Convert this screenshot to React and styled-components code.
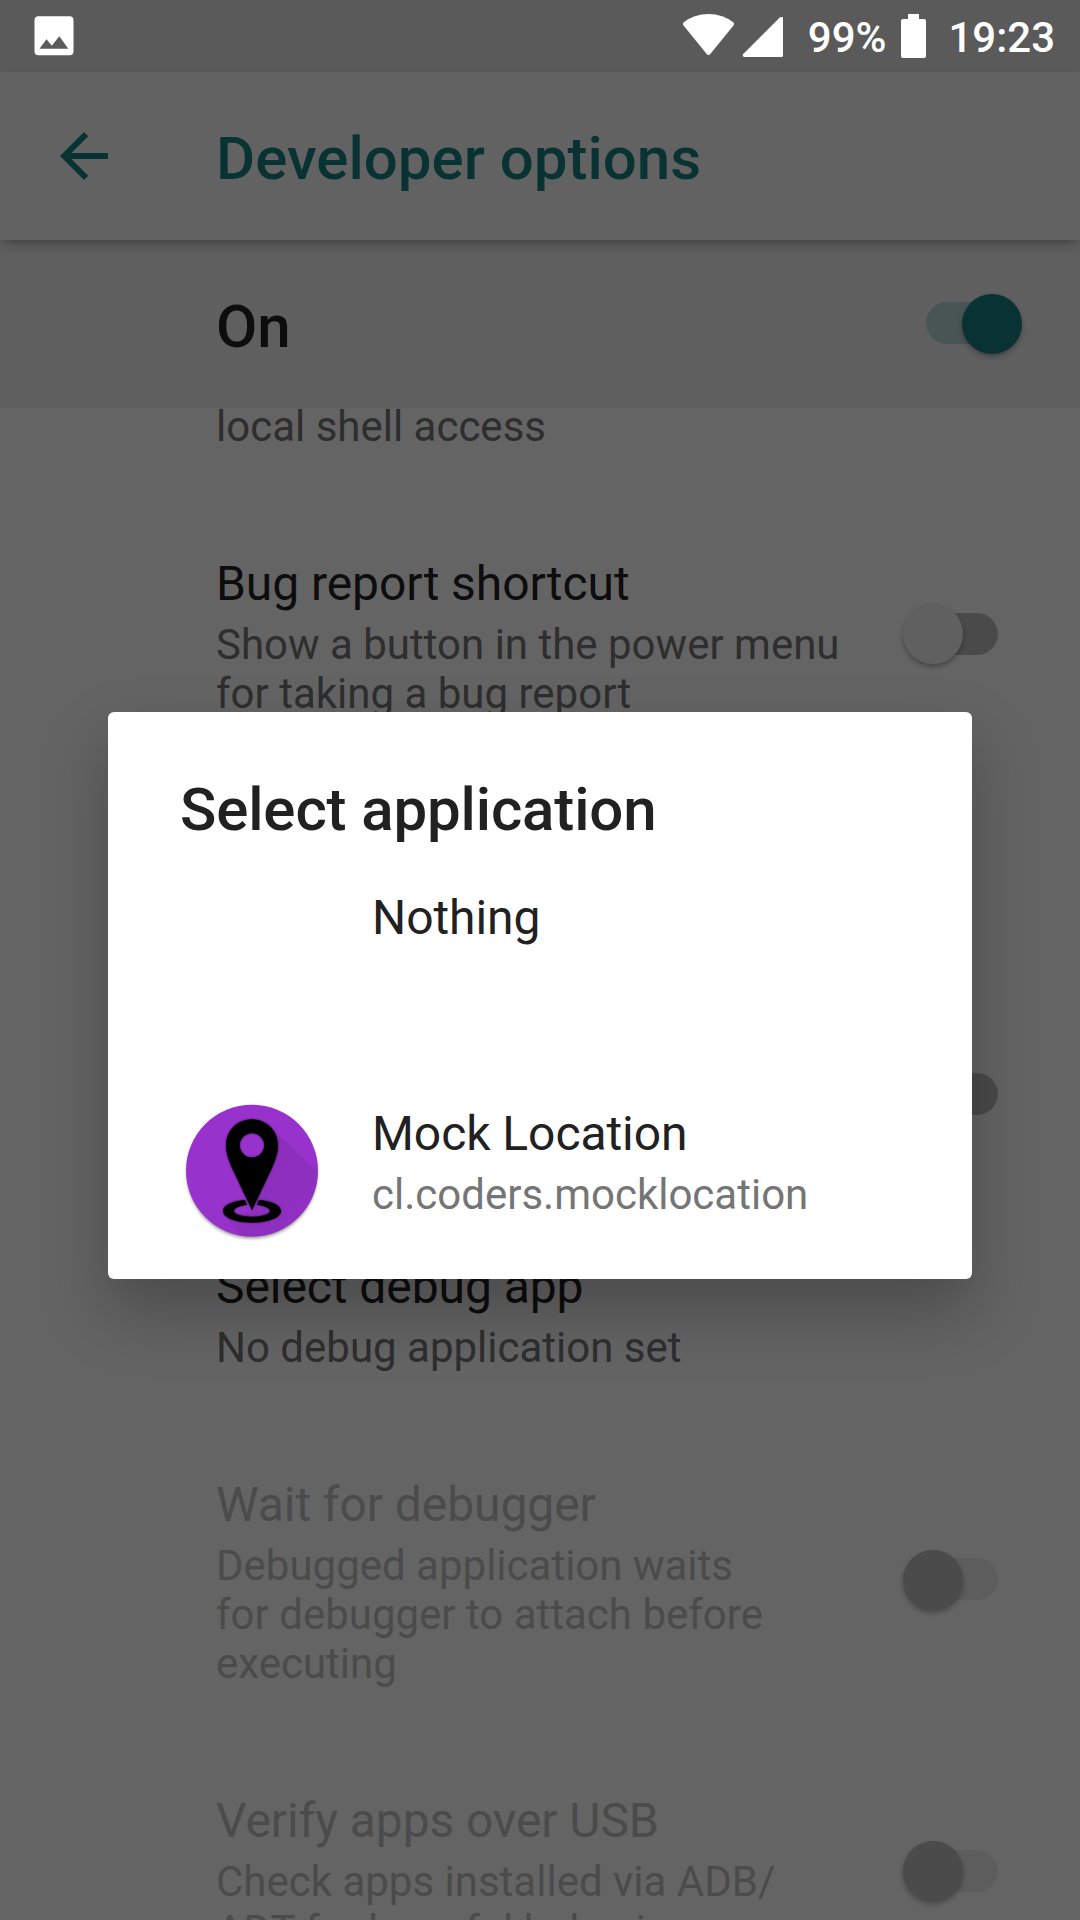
import React from "react";
import styled, { createGlobalStyle } from "styled-components";

const GlobalStyle = createGlobalStyle`
  * { box-sizing: border-box; }
  html, body { margin: 0; padding: 0; background: #646464; }
  body { font-family: Roboto, "Noto Sans", sans-serif; }
`;

const Screen = styled.div`
  position: relative;
  display: flex;
  flex-direction: column;
  width: 1080px;
  height: 1920px;
  overflow: hidden;
  background: #646464;
`;

const StatusBar = styled.header`
  display: flex;
  align-items: flex-start;
  justify-content: space-between;
  flex: none;
  height: 72px;
  padding: 0 25px 0 34px;
  background: #5a5a5a;
  color: #fff;
`;

const StatusIcons = styled.div`
  display: flex;
  align-items: flex-start;
`;

const StatusText = styled.span`
  font-size: 42px;
  font-weight: 500;
  line-height: 50px;
  padding-top: 13px;
  white-space: nowrap;
  margin-left: ${(p) => p.$gap}px;
`;

const StatusGlyph = styled.svg`
  display: block;
  flex: none;
  fill: #fff;
  margin-left: ${(p) => p.$gap || 0}px;
`;

const Toolbar = styled.div`
  display: flex;
  align-items: flex-start;
  flex: none;
  height: 168px;
  padding: 0 48px;
  background: #626262;
  color: #093233;
  z-index: 1;
  box-shadow: 0 6px 10px -3px rgba(0, 0, 0, 0.32);
`;

const BackIcon = styled.svg`
  display: block;
  width: 72px;
  height: 72px;
  margin-top: 48px;
  fill: currentColor;
`;

const ToolbarTitle = styled.h1`
  margin: 52px 0 0 96px;
  font-size: 60px;
  font-weight: 500;
  line-height: 70px;
  white-space: nowrap;
`;

const SwitchBar = styled.div`
  display: flex;
  align-items: center;
  justify-content: space-between;
  flex: none;
  height: 168px;
  padding: 0 58px 0 216px;
  background: #5f5f5f;
`;

const SwitchBarLabel = styled.span`
  padding-top: 5px;
  font-size: 60px;
  font-weight: 500;
  line-height: 70px;
  color: #0d0d0d;
`;

const tones = {
  on: { track: "#495455", thumb: "#093233" },
  off: { track: "#4a4a4a", thumb: "#606060" },
  disabled: { track: "#5d5d5d", thumb: "#4b4b4b" },
};

const Track = styled.span`
  display: flex;
  align-items: center;
  flex: none;
  justify-content: ${(p) => (p.$tone === "on" ? "flex-end" : "flex-start")};
  width: 96px;
  height: 42px;
  margin-top: ${(p) => (p.$tone === "on" ? -2 : -7)}px;
  border-radius: 21px;
  background: linear-gradient(
      ${(p) => tones[p.$tone].track},
      ${(p) => tones[p.$tone].track}
    )
    ${(p) => (p.$tone === "on" ? "left" : "right")} / 72px 42px no-repeat;
`;

const Thumb = styled.span`
  flex: none;
  width: 60px;
  height: 60px;
  margin: 1px 0.5px 0;
  border-radius: 50%;
  background: ${(p) => tones[p.$tone].thumb};
  box-shadow: 0 3px 5px rgba(0, 0, 0, 0.28);
`;

const List = styled.main`
  flex: 1;
  min-height: 0;
  overflow: hidden;
`;

const Row = styled.section`
  display: flex;
  align-items: center;
  justify-content: space-between;
  min-height: 218px;
  padding: 52px 82px 53px 216px;
`;

const PartialRow = styled.section`
  height: 102px;
  margin-top: -6px;
  padding-left: 216px;
`;

const RowTitle = styled.div`
  margin-bottom: 8px;
  font-size: 48px;
  line-height: 56px;
  letter-spacing: -0.07px;
  white-space: nowrap;
  color: ${(p) => (p.$disabled ? "#4b4b4b" : "#0d0d0d")};
`;

const RowSummary = styled.div`
  font-size: 42px;
  line-height: 49px;
  white-space: pre;
  color: ${(p) => (p.$disabled ? "#4b4b4b" : "#2e2e2e")};
`;

const Dialog = styled.div`
  position: absolute;
  left: 108px;
  top: 712px;
  z-index: 2;
  width: 864px;
  height: 567px;
  padding-top: 63px;
  border-radius: 6px;
  background: #fff;
  box-shadow: 0 32px 64px rgba(0, 0, 0, 0.25);
`;

const DialogTitle = styled.h2`
  margin: 0 0 2px;
  padding: 0 72px;
  font-size: 60px;
  font-weight: 500;
  line-height: 70px;
  letter-spacing: -0.13px;
  color: #212121;
`;

const AppRow = styled.div`
  display: flex;
  height: 216px;
  padding: 0 72px;
`;

const AppIconSlot = styled.div`
  width: 144px;
  height: 144px;
  margin: 35px 48px 0 0;
`;

const AppText = styled.div`
  padding-top: 43px;
`;

const AppName = styled.div`
  margin-bottom: 8px;
  font-size: 48px;
  line-height: 56px;
  letter-spacing: -0.07px;
  color: #212121;
`;

const AppPackage = styled.div`
  font-size: 42px;
  line-height: 49px;
  color: #757575;
`;

function Switch({ tone }) {
  return (
    <Track $tone={tone}>
      <Thumb $tone={tone} />
    </Track>
  );
}

function Preference({ title, summary, tone }) {
  const disabled = tone === "disabled";
  return (
    <Row>
      <div>
        {title && <RowTitle $disabled={disabled}>{title}</RowTitle>}
        {summary && <RowSummary $disabled={disabled}>{summary}</RowSummary>}
      </div>
      {tone && <Switch tone={tone} />}
    </Row>
  );
}

function MockLocationIcon() {
  return (
    <svg width="144" height="144" viewBox="60 54 432 432">
      <defs>
        <clipPath id="disc">
          <circle cx="276" cy="272" r="198" />
        </clipPath>
        <filter id="soft" x="-10%" y="-10%" width="120%" height="125%">
          <feGaussianBlur stdDeviation="5" />
        </filter>
        <filter id="halo" x="-10%" y="-10%" width="120%" height="120%">
          <feGaussianBlur stdDeviation="2.5" />
        </filter>
        <linearGradient id="cast" x1="0" y1="0" x2="1" y2="1">
          <stop offset="0" stopColor="#000" stopOpacity="0.1" />
          <stop offset="1" stopColor="#000" stopOpacity="0.03" />
        </linearGradient>
        <g id="pin">
          <path
            fillRule="evenodd"
            d="M276 118C232 118 198 152 198 196C198 222 207 243 217 266L276 391L335 266C345 243 354 222 354 196C354 152 320 118 276 118ZM276 159.500A36.500 36.500 0 1 1 276 232.500A36.500 36.500 0 1 1 276 159.500Z"
          />
          <path d="M255 360C216 363 189 376 189 393C189 413 226 428 276 428C326 428 363 413 363 393C363 376 336 363 297 360L291 374C314 377 330 384 330 393C330 403 306 410 276 410C246 410 222 403 222 393C222 384 238 377 261 374Z" />
        </g>
      </defs>
      <circle cx="276" cy="279" r="197" fill="#000" opacity="0.35" filter="url(#soft)" />
      <circle cx="276" cy="272" r="198" fill="#9832cc" />
      <path
        clipPath="url(#disc)"
        d="M331 141L520 320V520H285L205 420L276 391Z"
        fill="url(#cast)"
      />
      <use href="#pin" opacity="0.6" filter="url(#halo)" />
      <use href="#pin" />
    </svg>
  );
}

export default function App() {
  return (
    <>
      <GlobalStyle />
      <Screen>
        <StatusBar>
          <StatusGlyph width="40" height="72" viewBox="34 0 40 72">
            <path
              fillRule="evenodd"
              d="M38.500 16.300H69.500Q73.500 16.300 73.500 20.300V51.300Q73.500 55.300 69.500 55.300H38.500Q34.500 55.300 34.500 51.300V20.300Q34.500 16.300 38.500 16.300ZM39.500 48.800H68.300L59.300 36.200L51.800 45.700L46.500 39.300Z"
            />
          </StatusGlyph>
          <StatusIcons>
            <StatusGlyph width="101" height="72" viewBox="683 0 101 72">
              <path d="M683.500 22.500Q694 14 708.500 14Q723 14 733.500 22.500Q734.500 24 733.500 25.500L710.300 54Q708.500 56 706.700 54L683.500 25.500Q682.500 24 683.500 22.500Z" />
              <path d="M779.500 17.700Q781 16.500 783 17.300V55.500Q783 57 781.500 57H744.500Q743 57 743 55.500V54.200Z" />
            </StatusGlyph>
            <StatusText $gap={24}>99%</StatusText>
            <StatusGlyph $gap={15} width="25" height="72" viewBox="901 0 25 72">
              <path d="M908 14H919V19H924Q926 19 926 21V56Q926 58 924 58H903Q901 58 901 56V21Q901 19 903 19H908Z" />
            </StatusGlyph>
            <StatusText $gap={22}>19:23</StatusText>
          </StatusIcons>
        </StatusBar>

        <Toolbar>
          <BackIcon viewBox="0 0 24 24">
            <path d="M20 11H7.830l5.590-5.590L12 4l-8 8 8 8 1.410-1.410L7.830 13H20v-2z" />
          </BackIcon>
          <ToolbarTitle>Developer options</ToolbarTitle>
        </Toolbar>

        <SwitchBar>
          <SwitchBarLabel>On</SwitchBarLabel>
          <Switch tone="on" />
        </SwitchBar>

        <List>
          <PartialRow>
            <RowSummary>local shell access</RowSummary>
          </PartialRow>
          <Preference
            title="Bug report shortcut"
            summary={"Show a button in the power menu\nfor taking a bug report"}
            tone="off"
          />
          <Preference />
          <Preference tone="off" />
          <Preference title="Select debug app" summary="No debug application set" />
          <Preference
            title="Wait for debugger"
            summary={"Debugged application waits\nfor debugger to attach before\nexecuting"}
            tone="disabled"
          />
          <Preference
            title="Verify apps over USB"
            summary={"Check apps installed via ADB/\nADT for harmful behavior."}
            tone="disabled"
          />
        </List>

        <Dialog>
          <DialogTitle>Select application</DialogTitle>
          <AppRow>
            <AppIconSlot />
            <AppText>
              <AppName>Nothing</AppName>
            </AppText>
          </AppRow>
          <AppRow>
            <AppIconSlot>
              <MockLocationIcon />
            </AppIconSlot>
            <AppText>
              <AppName>Mock Location</AppName>
              <AppPackage>cl.coders.mocklocation</AppPackage>
            </AppText>
          </AppRow>
        </Dialog>
      </Screen>
    </>
  );
}
